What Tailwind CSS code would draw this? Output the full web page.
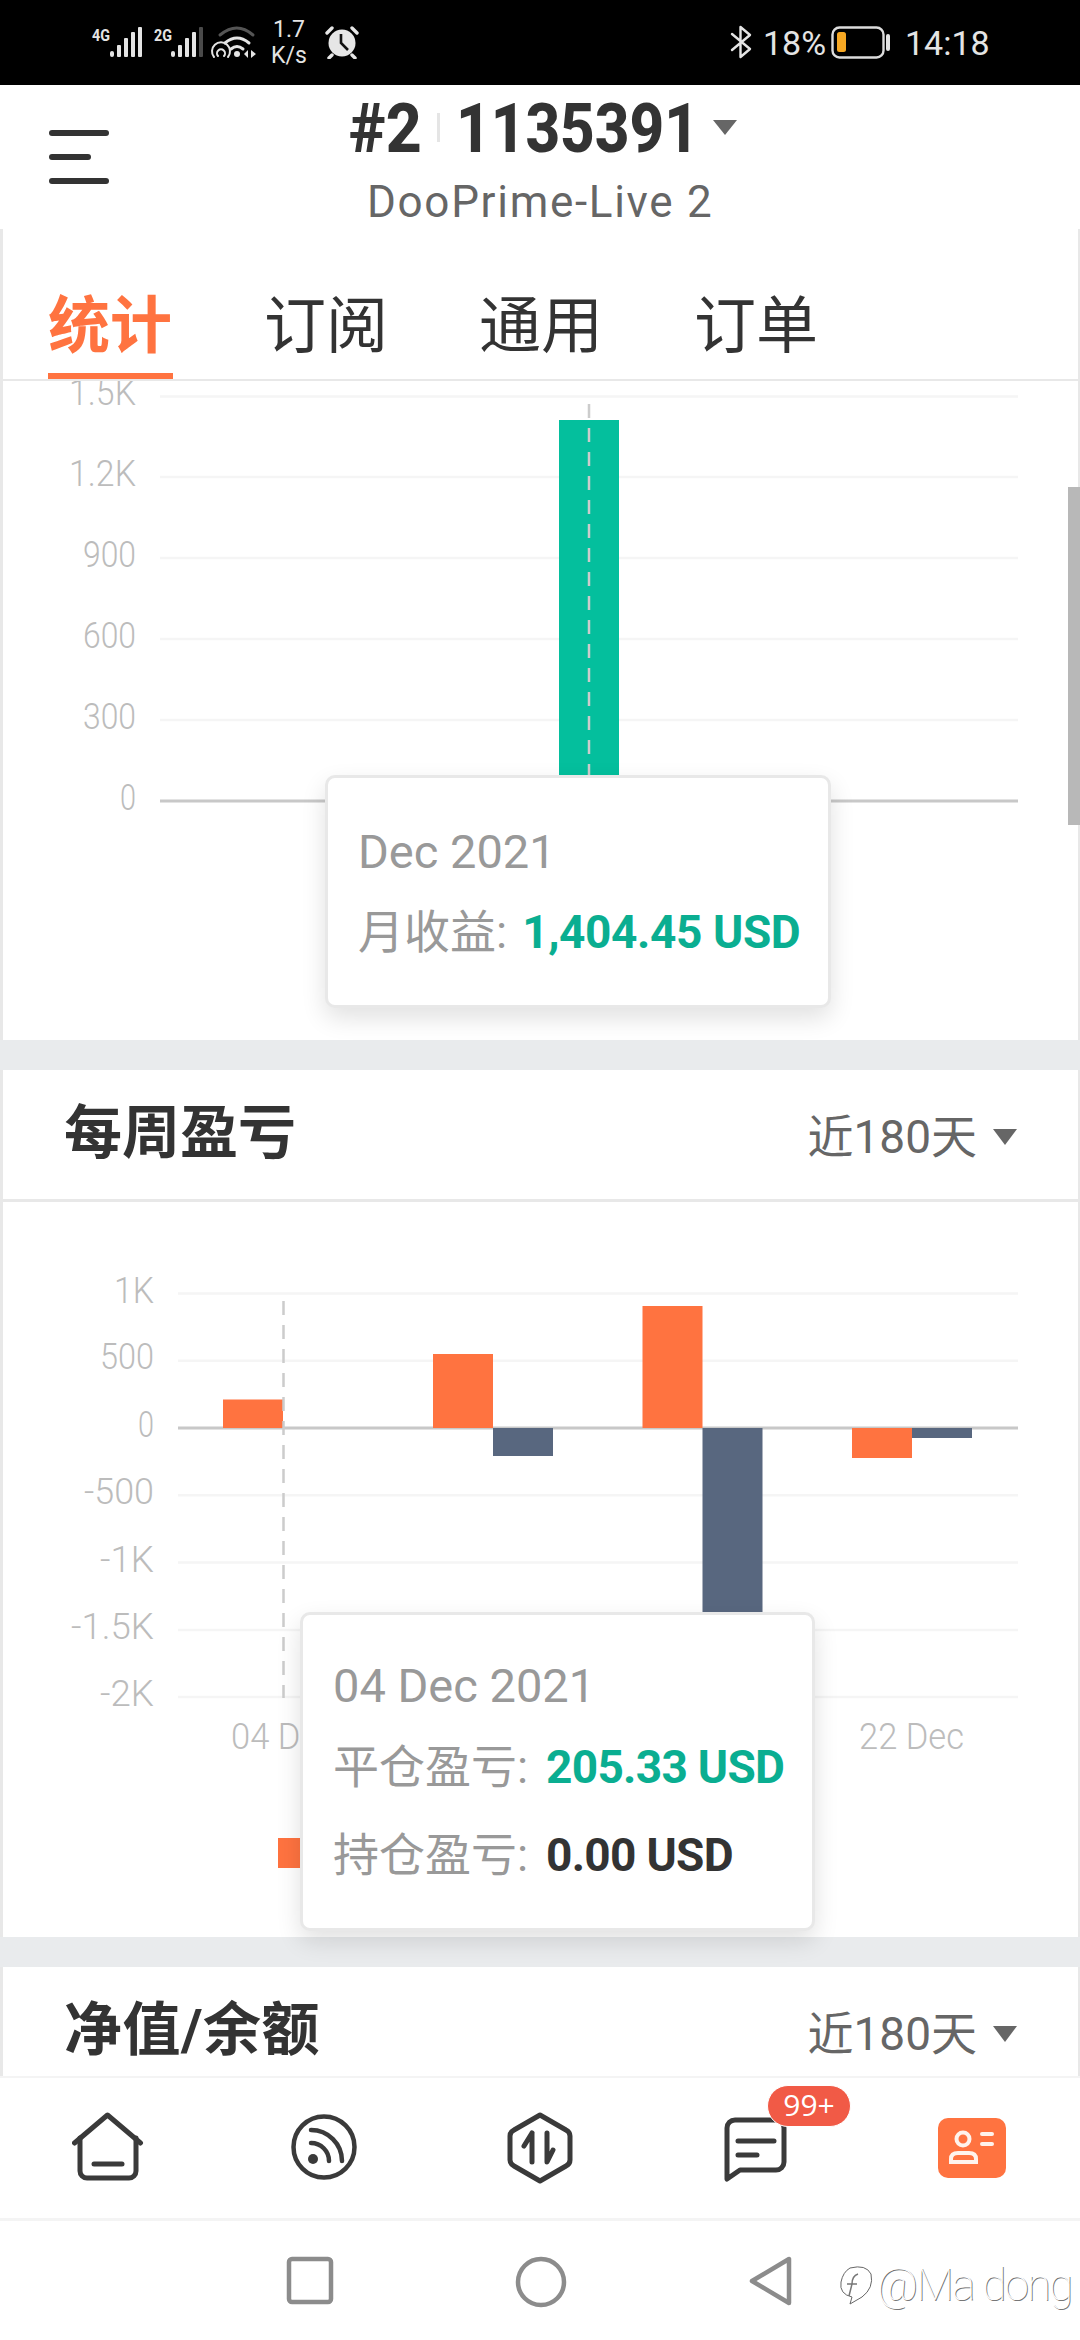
<!DOCTYPE html>
<html lang="zh">
<head>
<meta charset="utf-8">
<script src="https://cdn.jsdelivr.net/npm/@tailwindcss/browser@4"></script>
</head>
<body class="w-[1080px] h-[2340px] overflow-hidden bg-white flex flex-col relative [font-family:Roboto,'Noto_Sans_CJK_SC',sans-serif]">

<!-- status bar -->
<div class="h-[85px] shrink-0 bg-black flex items-start pt-[15px] text-[#e4e4e4]">
  <svg class="ml-[85px] shrink-0" width="180" height="50" viewBox="85 15 180 50">
    <text x="92" y="41" font-size="17" font-weight="700" fill="#e4e4e4" textLength="18" lengthAdjust="spacingAndGlyphs">4G</text>
    <g fill="#e4e4e4">
      <rect x="110" y="51" width="4" height="6" rx="2"/><rect x="117" y="45" width="4" height="12" rx="1"/><rect x="124" y="38" width="4" height="19" rx="1"/><rect x="131" y="32" width="4" height="25" rx="1"/><rect x="138" y="27" width="4" height="30" rx="1"/>
    </g>
    <text x="154" y="41" font-size="17" font-weight="700" fill="#e4e4e4" textLength="18" lengthAdjust="spacingAndGlyphs">2G</text>
    <g fill="#e4e4e4">
      <rect x="171" y="51" width="4" height="6" rx="2"/><rect x="178" y="45" width="4" height="12" rx="1"/><rect x="185" y="38" width="4" height="19" rx="1"/><rect x="192" y="32" width="4" height="25" rx="1"/><rect x="199" y="27" width="4" height="30" rx="1" fill="#4a4a4a"/>
    </g>
    <g fill="none" stroke-linecap="round">
      <path d="M220 35 Q237 21 253 35" stroke="#555" stroke-width="3"/>
      <path d="M225 43 Q237 33 249 43" stroke="#e4e4e4" stroke-width="3"/>
      <path d="M231 49 Q237 44 243 49" stroke="#e4e4e4" stroke-width="3"/>
      <path d="M214 57 A9 9 0 1 1 228 57" stroke="#e4e4e4" stroke-width="2"/>
      <path d="M218 56 A4 4 0 1 1 224 56" stroke="#e4e4e4" stroke-width="2"/>
    </g>
    <circle cx="237" cy="54" r="3" fill="#e4e4e4"/>
    <path d="M244 54 L248 50 V58 Z M251 50 L256 54 L251 58 Z" fill="#e4e4e4"/>
  </svg>
  <div class="w-[42px] ml-[3px] mt-[2px] text-center text-[23px] leading-[26px] shrink-0"><div>1.7</div><div>K/s</div></div>
  <svg class="ml-[14px] mt-[10px] shrink-0" width="36" height="34" viewBox="0 0 36 34">
    <circle cx="18" cy="18" r="13.5" fill="#e6e6e6"/>
    <path d="M17 9 V18 L24 25" stroke="#111" stroke-width="2.6" fill="none"/>
    <path d="M3 8 L8 3 M33 8 L28 3 M8 30 L5 33 M28 30 L31 33" stroke="#e6e6e6" stroke-width="3.4" stroke-linecap="round"/>
  </svg>
  <svg class="ml-[369px] mt-[10px] shrink-0" width="24" height="34" viewBox="0 0 24 34">
    <path d="M3 9 L21 24 L11.500 32 V2 L21 10 L3 25" fill="none" stroke="#e4e4e4" stroke-width="2.4" stroke-linejoin="round" stroke-linecap="round"/>
  </svg>
  <div class="ml-[10px] mt-[8px] text-[34px] leading-[40px] w-[66px] shrink-0">18%</div>
  <svg class="ml-[2px] mt-[11px] shrink-0" width="62" height="34" viewBox="0 0 62 34">
    <rect x="1.500" y="1.500" width="51" height="30" rx="7" fill="none" stroke="#dcdcdc" stroke-width="2.4"/>
    <rect x="6" y="6" width="9" height="20" rx="2.500" fill="#f7a823"/>
    <rect x="55" y="8" width="4" height="17" rx="2" fill="#e4e4e4"/>
  </svg>
  <div class="ml-[12px] mt-[8px] text-[34px] leading-[40px] shrink-0">14:18</div>
</div>

<!-- top bar -->
<div class="h-[144px] shrink-0 bg-white flex items-start">
  <div class="ml-[49px] mt-[45px] w-[60px] flex flex-col gap-[18px] shrink-0">
    <div class="h-[6px] rounded-full bg-[#333]"></div>
    <div class="h-[6px] w-[42px] rounded-full bg-[#333]"></div>
    <div class="h-[6px] rounded-full bg-[#333]"></div>
  </div>
  <div class="ml-[240px] mt-[20px] flex flex-col">
    <div class="flex items-start h-[48px] text-[#333] font-extrabold text-[68px] leading-[48px]">
      <div class="w-[73px] origin-left scale-x-[0.92] whitespace-nowrap">#2</div>
      <div class="w-[3px] h-[29px] mt-[8px] ml-[15px] bg-[#e5e5e5]"></div>
      <div class="w-[232px] ml-[16px] origin-left scale-x-[0.885] whitespace-nowrap">1135391</div>
      <svg class="ml-[25px] mt-[15px]" width="24" height="15" viewBox="0 0 24 15"><path d="M0 0H24L12 15Z" fill="#666"/></svg>
    </div>
    <div class="ml-[18px] mt-[27px] text-[44px] leading-[44px] tracking-[1.7px] text-[#666] whitespace-nowrap">DooPrime-Live 2</div>
  </div>
</div>

<!-- content -->
<div class="flex-1 flex flex-col min-h-0 relative bg-[#e9ebed]">
  <!-- tabs -->
  <div class="h-[152px] shrink-0 bg-white shadow-[inset_3px_0_0_#e8e8e8,inset_-2px_0_0_#e8e8e8] border-b-[2px] border-[#e8e8e8] flex items-start pl-[48px] gap-[91px] text-[62px] leading-[70px] text-[#333]">
    <div class="w-[125px] h-[150px] pt-[63px] border-b-[6px] border-[#ff7340] font-bold text-[#ff7340] whitespace-nowrap">统计</div>
    <div class="pt-[63px] whitespace-nowrap">订阅</div>
    <div class="pt-[63px] whitespace-nowrap">通用</div>
    <div class="pt-[63px] whitespace-nowrap">订单</div>
  </div>

  <!-- monthly chart -->
  <div class="h-[659px] shrink-0 bg-white relative shadow-[inset_3px_0_0_#e8e8e8,inset_-2px_0_0_#e8e8e8]">
    <svg class="block" width="1080" height="659" viewBox="0 381 1080 659" font-size="36" font-weight="300" fill="#bcbcbc" text-anchor="end">
      <g stroke="#f5f5f5" stroke-width="2.500">
        <path d="M160 396.500H1018M160 477H1018M160 558H1018M160 639H1018M160 720H1018"/>
      </g>
      <path d="M160 801H1018" stroke="#c8c8c8" stroke-width="3"/>
      <text x="136" y="405" textLength="67" lengthAdjust="spacingAndGlyphs">1.5K</text>
      <text x="136" y="486" textLength="67" lengthAdjust="spacingAndGlyphs">1.2K</text>
      <text x="136" y="567" textLength="53" lengthAdjust="spacingAndGlyphs">900</text>
      <text x="136" y="648" textLength="53" lengthAdjust="spacingAndGlyphs">600</text>
      <text x="136" y="729" textLength="53" lengthAdjust="spacingAndGlyphs">300</text>
      <text x="136" y="810" textLength="16" lengthAdjust="spacingAndGlyphs">0</text>
      <rect x="559" y="420" width="60" height="381" fill="#04bf9d"/>
      <path d="M589 404V800" stroke="#ccc" stroke-width="2.500" stroke-dasharray="14 10"/>
    </svg>
    <div class="absolute left-[325px] top-[394px] w-[506px] h-[233px] bg-white border-[3px] border-[#e8e8e8] rounded-[10px] shadow-[0_10px_24px_rgba(0,0,0,0.12)] pl-[30px] pt-[46px] text-[47px] leading-[56px] text-[#999] whitespace-nowrap">
      <div>Dec 2021</div>
      <div class="mt-[24px] flex"><span class="text-[46px]">月收益:</span><span class="ml-[15px] text-[46px] font-bold text-[#0aae91] tracking-[-0.4px]">1,404.45 USD</span></div>
    </div>
    <div class="absolute right-0 top-[106px] w-[12px] h-[338px] bg-[#b8b8b8]"></div>
  </div>
  <div class="h-[30px] shrink-0"></div>

  <!-- weekly header -->
  <div class="h-[132px] shrink-0 bg-white shadow-[inset_3px_0_0_#e8e8e8,inset_-2px_0_0_#e8e8e8] border-b-[3px] border-[#e8e8e8] flex items-start pl-[64px] pr-[63px] pt-[29px]">
    <div class="text-[58px] leading-[68px] font-bold text-[#333] whitespace-nowrap">每周盈亏</div>
    <div class="ml-auto mt-[7px] flex items-center text-[46px] leading-[62px] text-[#666] whitespace-nowrap">近180天<svg class="ml-[16px]" width="24" height="16" viewBox="0 0 24 16"><path d="M0 0H24L12 16Z" fill="#666"/></svg></div>
  </div>

  <!-- weekly chart -->
  <div class="h-[735px] shrink-0 bg-white relative shadow-[inset_3px_0_0_#e8e8e8,inset_-2px_0_0_#e8e8e8]">
    <svg class="block" width="1080" height="735" viewBox="0 1202 1080 735" font-size="36" font-weight="300" fill="#bcbcbc" text-anchor="end">
      <path d="M178 1293.500H1018M178 1360.800H1018M178 1495.300H1018M178 1562.600H1018M178 1630H1018M178 1697H1018" stroke="#f5f5f5" stroke-width="2.500"/>
      <path d="M178 1428H1018" stroke="#c8c8c8" stroke-width="3"/>
      <text x="154" y="1303" textLength="40" lengthAdjust="spacingAndGlyphs">1K</text>
      <text x="154" y="1369" textLength="54" lengthAdjust="spacingAndGlyphs">500</text>
      <text x="154" y="1437" textLength="16" lengthAdjust="spacingAndGlyphs">0</text>
      <text x="154" y="1504" textLength="70" lengthAdjust="spacingAndGlyphs">-500</text>
      <text x="154" y="1572" textLength="54" lengthAdjust="spacingAndGlyphs">-1K</text>
      <text x="154" y="1639" textLength="83" lengthAdjust="spacingAndGlyphs">-1.5K</text>
      <text x="154" y="1706" textLength="54" lengthAdjust="spacingAndGlyphs">-2K</text>
      <g fill="#ff7340">
        <rect x="223" y="1399.500" width="60" height="28.500"/>
        <rect x="433" y="1354" width="60" height="74"/>
        <rect x="642.500" y="1306" width="60" height="122"/>
        <rect x="852" y="1428" width="60" height="30"/>
      </g>
      <g fill="#58677f">
        <rect x="493" y="1428" width="60" height="28"/>
        <rect x="702.500" y="1428" width="60" height="190"/>
        <rect x="912" y="1428" width="60" height="10"/>
      </g>
      <path d="M283.500 1301V1698" stroke="#ccc" stroke-width="2.500" stroke-dasharray="14 10"/>
      <text x="336" y="1749" textLength="105" lengthAdjust="spacingAndGlyphs">04 Dec</text>
      <text x="964" y="1749" textLength="105" lengthAdjust="spacingAndGlyphs">22 Dec</text>
      <rect x="278" y="1838" width="30" height="30" fill="#ff7340"/>
    </svg>
    <div class="absolute z-10 left-[300px] top-[410px] w-[515px] h-[319px] bg-white border-[3px] border-[#e8e8e8] rounded-[10px] shadow-[0_10px_24px_rgba(0,0,0,0.12)] pl-[30px] pt-[41px] text-[46px] leading-[60px] text-[#999] whitespace-nowrap">
      <div class="text-[47px]">04 Dec 2021</div>
      <div class="mt-[21px] flex"><span class="w-[213px]">平仓盈亏:</span><span class="font-bold text-[#0aae91] tracking-[-0.7px]">205.33 USD</span></div>
      <div class="mt-[28px] flex"><span class="w-[213px]">持仓盈亏:</span><span class="font-bold text-[#333] tracking-[-0.7px]">0.00 USD</span></div>
    </div>
  </div>
  <div class="h-[30px] shrink-0"></div>

  <!-- equity header -->
  <div class="h-[109px] shrink-0 bg-white shadow-[inset_3px_0_0_#e8e8e8,inset_-2px_0_0_#e8e8e8] flex items-start pl-[64px] pr-[63px] pt-[29px]">
    <div class="text-[58px] leading-[68px] font-bold text-[#333] whitespace-nowrap tracking-[0.5px]">净值/余额</div>
    <div class="ml-auto mt-[7px] flex items-center text-[46px] leading-[62px] text-[#666] whitespace-nowrap">近180天<svg class="ml-[16px]" width="24" height="16" viewBox="0 0 24 16"><path d="M0 0H24L12 16Z" fill="#666"/></svg></div>
  </div>
</div>

<!-- tab bar -->
<div class="h-[145px] shrink-0 bg-white border-t-[2px] border-b-[3px] border-[#f4f4f4] grid grid-cols-5 items-start">
  <div class="flex justify-center pt-[34px]">
    <svg width="72" height="72" viewBox="0 0 72 72" fill="none" stroke="#3a3a3a" stroke-width="5" stroke-linecap="round" stroke-linejoin="round">
      <path d="M2.500 31L35.500 3L68.500 31"/>
      <path d="M8 26V59a7 7 0 0 0 7 7H57a7 7 0 0 0 7-7V26"/>
      <path d="M22 52H50"/>
    </svg>
  </div>
  <div class="flex justify-center pt-[36px]">
    <svg width="66" height="66" viewBox="0 0 66 66" fill="none" stroke="#3a3a3a" stroke-width="4.500" stroke-linecap="round">
      <circle cx="33" cy="33" r="30.500"/>
      <path d="M20 29A18 18 0 0 1 38 47"/>
      <path d="M20 16A31 31 0 0 1 51 47"/>
      <circle cx="22" cy="45" r="5" fill="#3a3a3a" stroke="none"/>
    </svg>
  </div>
  <div class="flex justify-center pt-[34px]">
    <svg width="66" height="72" viewBox="0 0 66 72" fill="none" stroke="#3a3a3a" stroke-width="5" stroke-linecap="round" stroke-linejoin="round">
      <path d="M33 3L59 18Q63 20 63 24V48Q63 52 59 54L33 69L7 54Q3 52 3 48V24Q3 20 7 18Z"/>
      <path d="M25 21V50M25 21L17 34"/>
      <path d="M40 21V50L46 38"/>
    </svg>
  </div>
  <div class="flex justify-center pt-[39px] relative">
    <svg width="64" height="66" viewBox="0 0 64 66" fill="none" stroke="#3a3a3a" stroke-width="5" stroke-linecap="round" stroke-linejoin="round">
      <path d="M3 62V11a8 8 0 0 1 8-8H52a8 8 0 0 1 8 8V45a8 8 0 0 1-8 8H16Z"/>
      <path d="M14 24H50M14 38H33"/>
    </svg>
    <div class="absolute left-[119px] top-[7px] w-[84px] h-[42px] rounded-full bg-[#f15a46] border-[1.500px] border-white text-white text-[30px] leading-[38px] text-center [font-family:'Open_Sans',sans-serif]">99+</div>
  </div>
  <div class="flex justify-center pt-[40px]">
    <svg width="68" height="60" viewBox="0 0 68 60">
      <rect width="68" height="60" rx="10" fill="#ff7340"/>
      <g fill="none" stroke="#fff3ec" stroke-width="4" stroke-linecap="round">
        <circle cx="25" cy="21" r="6.500"/>
        <path d="M13 44V41Q13 35 20 35H31Q38 35 38 41V44Z"/>
        <path d="M44 16H54M44 26H54"/>
      </g>
    </svg>
  </div>
</div>

<!-- navigation bar -->
<div class="h-[119px] shrink-0 bg-white relative flex items-start">
  <svg class="ml-[284px] mt-[34px] shrink-0" width="52" height="52" viewBox="0 0 52 52"><rect x="5" y="4" width="42" height="43" rx="3" fill="none" stroke="#8c8c8c" stroke-width="4.500"/></svg>
  <svg class="ml-[178px] mt-[34px] shrink-0" width="54" height="54" viewBox="0 0 54 54"><circle cx="27" cy="27" r="23" fill="none" stroke="#8c8c8c" stroke-width="4.500"/></svg>
  <svg class="ml-[178px] mt-[33px] shrink-0" width="48" height="54" viewBox="0 0 48 54"><path d="M43 5V49L6 27Z" fill="none" stroke="#8c8c8c" stroke-width="4.500" stroke-linejoin="round"/></svg>
  <div class="absolute left-[838px] top-[40px] flex items-center text-white [text-shadow:1px_1px_0_#777]">
    <svg width="36" height="42" viewBox="0 0 36 42" fill="none"><path d="M12 4Q28 0 33 10Q36 24 24 33L12 40L14 33Q1 30 3 18Q5 8 12 4Z" fill="#fff" stroke="#666" stroke-width="1"/><path d="M20 10Q14 12 14 20L11 32M9 20H19" stroke="#777" stroke-width="1.500"/></svg>
    <div class="ml-[3px] text-[44px] leading-[48px] font-thin tracking-[-1.800px] whitespace-nowrap">@Ma dong</div>
  </div>
</div>
</body>
</html>
